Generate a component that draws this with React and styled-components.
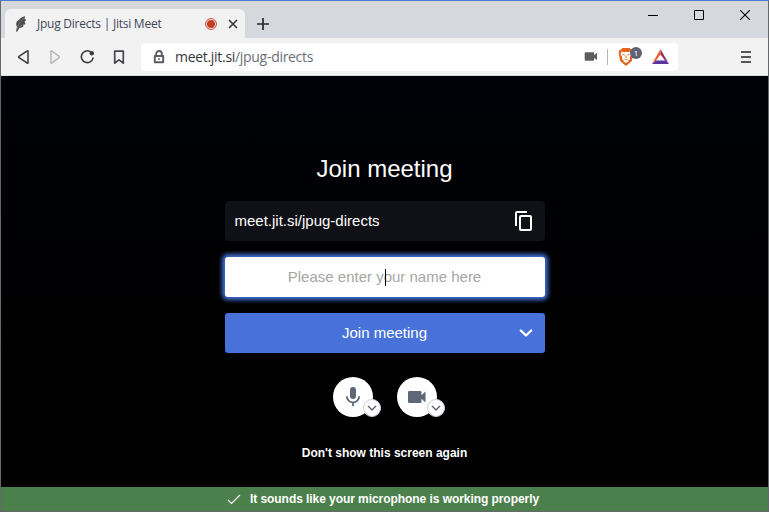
import React from 'react';
import styled, { createGlobalStyle } from 'styled-components';

const GlobalStyle = createGlobalStyle`
  * { box-sizing: border-box; }
  body { margin: 0; overflow: hidden; background: #000; }
  button { font: inherit; color: inherit; border: 0; padding: 0; background: none; }
  svg { display: block; flex: none; }
`;

const Window = styled.div`
  width: 769px;
  height: 512px;
  display: flex;
  flex-direction: column;
  border: 1px solid #666769;
  border-top-color: #4c78d2;
  background: #000;
  font-family: "Liberation Sans", Arial, sans-serif;
`;

const TabStrip = styled.header`
  height: 37px;
  flex: none;
  display: flex;
  align-items: flex-end;
  background: #d5d8dc;
`;

const Tab = styled.div`
  width: 240px;
  height: 29px;
  margin-left: 4px;
  padding: 0 7px 0 10px;
  display: flex;
  align-items: center;
  border-radius: 6px 6px 0 0;
  background: #f2f2f2;
`;

const TabTitle = styled.span`
  flex: 1;
  margin-left: 10px;
  padding-top: 1px;
  font: 12px/18px "Open Sans", "Noto Sans", sans-serif;
  letter-spacing: -0.24px;
  white-space: nowrap;
  color: #3f4759;
`;

const IconButton = styled.button`
  width: ${p => p.$w || 16}px;
  height: ${p => p.$h || 16}px;
  margin-left: ${p => p.$gap || 0}px;
  display: grid;
  place-items: center;
  flex: none;
`;

const WindowControls = styled.div`
  margin-left: auto;
  height: 100%;
  display: flex;
  align-items: flex-start;
`;

const Toolbar = styled.nav`
  height: 38px;
  flex: none;
  display: flex;
  align-items: center;
  padding-left: 14px;
  border-bottom: 1px solid #d9dfdc;
  background: #f2f2f2;
`;

const AddressBar = styled.div`
  width: 537px;
  height: 28px;
  margin-left: 14px;
  padding: 0 8px 0 12px;
  display: flex;
  align-items: center;
  border-radius: 4px;
  background: #fff;
`;

const Address = styled.span`
  flex: 1;
  margin-left: 10px;
  padding-top: 1px;
  font: 14px/20px "Open Sans", "Noto Sans", sans-serif;
  letter-spacing: -0.3px;
  color: #6b6d75;
  b { font-weight: 400; color: #35373c; }
`;

const Divider = styled.span`
  width: 1px;
  height: 16px;
  margin: 0 10px 0 9px;
  background: #b4b5b8;
`;

const Shield = styled.span`
  position: relative;
  width: 26px;
  height: 20px;
  margin-right: 7px;
`;

const Count = styled.span`
  position: absolute;
  left: 12px;
  top: 0;
  width: 12px;
  height: 12px;
  border-radius: 50%;
  background: #5e6274;
  color: #fff;
  font: 8px/12px "Open Sans", sans-serif;
  text-align: center;
`;

const Main = styled.main`
  flex: 1;
  display: flex;
  flex-direction: column;
  align-items: center;
  padding-top: 77px;
  background: linear-gradient(#010207, #000 70%);
  color: #fff;
`;

const Title = styled.h1`
  margin: 0 0 16px;
  font-size: 24px;
  line-height: 32px;
  font-weight: 400;
`;

const Form = styled.div`
  width: 320px;
  display: flex;
  flex-direction: column;
  gap: 16px;
  font-size: 15px;
  line-height: 24px;
`;

const MeetingLink = styled.div`
  height: 40px;
  padding: 0 13px 0 10px;
  display: flex;
  align-items: center;
  justify-content: space-between;
  border-radius: 4px;
  background: #101116;
`;

const NameField = styled.div`
  position: relative;
  height: 40px;
  display: grid;
  place-items: center;
  border-radius: 3px;
  background: #fff;
  color: #a6a6a6;
  box-shadow: 0 0 4px 3px #4270d5;
`;

const Caret = styled.i`
  position: absolute;
  left: 160px;
  top: 12px;
  width: 1px;
  height: 17px;
  background: #000;
`;

const JoinButton = styled.button`
  && {
    height: 40px;
    padding: 0 12px 0 11px;
    display: flex;
    align-items: center;
    border-radius: 3px;
    background: #4872d9;
  }
`;

const JoinLabel = styled.span`
  flex: 1;
  padding-left: 15px;
  text-align: center;
`;

const Devices = styled.div`
  display: flex;
  gap: 24px;
  margin-top: 24px;
`;

const DeviceButton = styled.div`
  position: relative;
  width: 40px;
  height: 40px;
  display: grid;
  place-items: center;
  border-radius: 50%;
  background: #fff;
  color: #5e6678;
`;

const DeviceMenu = styled.button`
  && {
    position: absolute;
    right: -8px;
    bottom: 0;
    width: 18px;
    height: 18px;
    display: grid;
    place-items: center;
    border: 1px solid #cdd0d6;
    border-radius: 50%;
    background: #fff;
  }
`;

const SkipOption = styled.div`
  margin-top: 28px;
  font-size: 12px;
  line-height: 16px;
  font-weight: 700;
`;

const StatusBar = styled.footer`
  height: 24px;
  flex: none;
  display: flex;
  align-items: center;
  justify-content: center;
  gap: 9px;
  padding-right: 3px;
  background: #4b7f4c;
  color: #fff;
  font-size: 12px;
  line-height: 16px;
  font-weight: 700;
  letter-spacing: -0.06px;
`;

const Feather = () => (
  <svg width="12" height="18" viewBox="0 0 12 18">
    <path d="M1 16.5 2 12Q-.5 7 4 4.7 6 2 10 1L9.5 3.5 11 5 9.5 7 10.5 9 8.5 10 8 12 4.5 13 2 16.8Z" fill="#48494c" />
    <path d="m2 14 2-5 5-6M4 12l5-3" fill="none" stroke="#a9aaac" strokeWidth=".5" />
  </svg>
);

const Back = ({ color = '#393b3e', flip }) => (
  <svg width="14" height="16" viewBox="0 0 14 16">
    <path d={flip ? 'M3 2.1v11.8q0 .8.7.2L11 8.6q.8-.6 0-1.2L3.7 1.9Q3 1.3 3 2.1Z' : 'M12 2.1v11.8q0 .8-.7.2L3 8.6q-.8-.6 0-1.2l8.3-5.5q.7-.6.7.2Z'} fill="none" stroke={color} strokeWidth="1.5" />
  </svg>
);

const Reload = () => (
  <svg width="16" height="16" viewBox="0 0 16 16">
    <path d="M14 9.1a5.9 5.9 0 1 1-3-6.6" fill="none" stroke="#393b3e" strokeWidth="1.6" strokeLinecap="round" />
    <circle cx="12.8" cy="4.3" r="2.2" fill="#393b3e" />
  </svg>
);

const Bookmark = () => (
  <svg width="12" height="16" viewBox="0 0 12 16">
    <path d="M1.7 2.2h8.6v12L6 10.8l-4.3 3.4Z" fill="none" stroke="#44464a" strokeWidth="1.7" strokeLinejoin="round" />
  </svg>
);

const Lock = () => (
  <svg width="12" height="14" viewBox="0 0 12 14">
    <path d="M3.2 6V3.8a2.8 2.8 0 0 1 5.6 0V6M1.8 6h8.4v6.2H1.8Z" fill="none" stroke="#5b5c60" strokeWidth="1.9" strokeLinejoin="round" />
    <path d="M5.2 8.2h1.6v1.8H5.2z" fill="#5b5c60" />
  </svg>
);

const Camera = ({ w = 20, h = 14, color = 'currentColor' }) => (
  <svg width={w} height={h} viewBox="0 0 20 14">
    <path d="M2.3 1h11q1.2 0 1.2 1.2v3l4-3.7v11l-4-3.7v3q0 1.2-1.2 1.2h-11Q1 13 1 11.8V2.2Q1 1 2.3 1Z" fill={color} />
  </svg>
);

const Lion = () => (
  <svg width="16" height="20" viewBox="0 0 16 20">
    <path d="m4.5 1h7L13 2.6l1.6.3.7 2.8-1.4 8.4L8 19l-5.9-4.9L.7 5.7l.7-2.8L3 2.6Z" fill="#e4631c" />
    <path d="m3.5 4.5 3 .7L8 4.7l1.5.5 3-.7 1 2.5-1.8 3 .5 2.4-2.1.7.8 1.1L8 16l-2.9-1.8.8-1.1-2.1-.7.5-2.4L2.5 7Z" fill="#fff" />
    <path d="m4.3 7.4 2.5.6M11.7 7.4 9.2 8M8 8.5v2.5m-1.5 1L8 13l1.5-1" fill="none" stroke="#e4631c" strokeWidth=".9" />
  </svg>
);

const Triangle = () => (
  <svg width="19" height="17" viewBox="0 0 19 17">
    <path d="M9.5 1v5.5L5 12.5 1 16Z" fill="#f05d27" />
    <path d="M9.5 1 18 16l-4-3.5-4.5-6Z" fill="#963067" />
    <path d="m1 16 4-3.5h9l4 3.5Z" fill="#57339c" />
  </svg>
);

const Chevron = ({ w = 14, h = 9, stroke = 2.3 }) => (
  <svg width={w} height={h} viewBox="0 0 14 9">
    <path d="m1.8 1.5 5.2 5 5.2-5" fill="none" stroke="currentColor" strokeWidth={stroke} strokeLinecap="round" strokeLinejoin="round" />
  </svg>
);

const Copy = () => (
  <svg width="17" height="20" viewBox="0 0 17 20">
    <path d="M1 15V2q0-1 1-1h10" fill="none" stroke="#fff" strokeWidth="2" />
    <rect x="5" y="5" width="11" height="14" rx="1" fill="none" stroke="#fff" strokeWidth="2" />
  </svg>
);

const Mic = () => (
  <svg width="16" height="20" viewBox="0 0 16 20">
    <rect x="5" y="0" width="6" height="12" rx="3" fill="currentColor" />
    <path d="M1.8 9.2a6.2 6.2 0 0 0 12.4 0M8 15.4V19" fill="none" stroke="currentColor" strokeWidth="1.8" />
  </svg>
);

export default function App() {
  return (
    <>
      <GlobalStyle />
      <Window>
        <TabStrip>
          <Tab>
            <Feather />
            <TabTitle>Jpug Directs | Jitsi Meet</TabTitle>
            <svg width="12" height="12" viewBox="0 0 12 12">
              <circle cx="6" cy="6" r="5.4" fill="none" stroke="#c6492f" strokeWidth="1" />
              <circle cx="6" cy="6" r="4" fill="#c43e22" />
            </svg>
            <IconButton $w={10} $gap={11} aria-label="Close tab">
              <svg width="10" height="10" viewBox="0 0 10 10"><path d="m1 1 8 8M9 1 1 9" stroke="#333539" strokeWidth="1.6" /></svg>
            </IconButton>
          </Tab>
          <IconButton $w={14} $h={28} $gap={11} aria-label="New tab">
            <svg width="12" height="12" viewBox="0 0 12 12"><path d="M6 0v12M0 6h12" stroke="#26282b" strokeWidth="1.7" /></svg>
          </IconButton>
          <WindowControls>
            <IconButton $w={46} $h={28} aria-label="Minimize"><svg width="10" height="10"><path d="M0 5.5h10" stroke="#000" /></svg></IconButton>
            <IconButton $w={46} $h={28} aria-label="Maximize"><svg width="10" height="10"><path d="M.5.5h9v9h-9Z" fill="none" stroke="#000" /></svg></IconButton>
            <IconButton $w={46} $h={28} aria-label="Close"><svg width="10" height="10"><path d="m0 0 10 10M10 0 0 10" stroke="#000" strokeWidth="1.1" /></svg></IconButton>
          </WindowControls>
        </TabStrip>
        <Toolbar>
          <IconButton aria-label="Back"><Back /></IconButton>
          <IconButton $gap={16} aria-label="Forward"><Back flip color="#b7b8ba" /></IconButton>
          <IconButton $gap={16} aria-label="Reload"><Reload /></IconButton>
          <IconButton $gap={16} aria-label="Bookmark"><Bookmark /></IconButton>
          <AddressBar>
            <Lock />
            <Address><b>meet.jit.si</b>/jpug-directs</Address>
            <Camera w={14} h={11} color="#5c5d60" />
            <Divider />
            <Shield><Lion /><Count>1</Count></Shield>
            <Triangle />
          </AddressBar>
          <IconButton $gap={60} aria-label="Menu">
            <svg width="10" height="12" viewBox="0 0 10 12"><path d="M0 1h10M0 6h10M0 11h10" stroke="#555659" strokeWidth="2" /></svg>
          </IconButton>
        </Toolbar>
        <Main>
          <Title>Join meeting</Title>
          <Form>
            <MeetingLink>meet.jit.si/jpug-directs<Copy /></MeetingLink>
            <NameField>Please enter your name here<Caret /></NameField>
            <JoinButton><JoinLabel>Join meeting</JoinLabel><Chevron /></JoinButton>
          </Form>
          <Devices>
            <DeviceButton><Mic /><DeviceMenu aria-label="Microphone options"><Chevron w={10} h={7} stroke={2} /></DeviceMenu></DeviceButton>
            <DeviceButton><Camera /><DeviceMenu aria-label="Camera options"><Chevron w={10} h={7} stroke={2} /></DeviceMenu></DeviceButton>
          </Devices>
          <SkipOption>Don't show this screen again</SkipOption>
        </Main>
        <StatusBar>
          <svg width="14" height="12" viewBox="0 0 14 12"><path d="m1 7 3.5 3.5L13 2" fill="none" stroke="#fff" strokeWidth="1.2" /></svg>
          <span>It sounds like your microphone is working properly</span>
        </StatusBar>
      </Window>
    </>
  );
}
